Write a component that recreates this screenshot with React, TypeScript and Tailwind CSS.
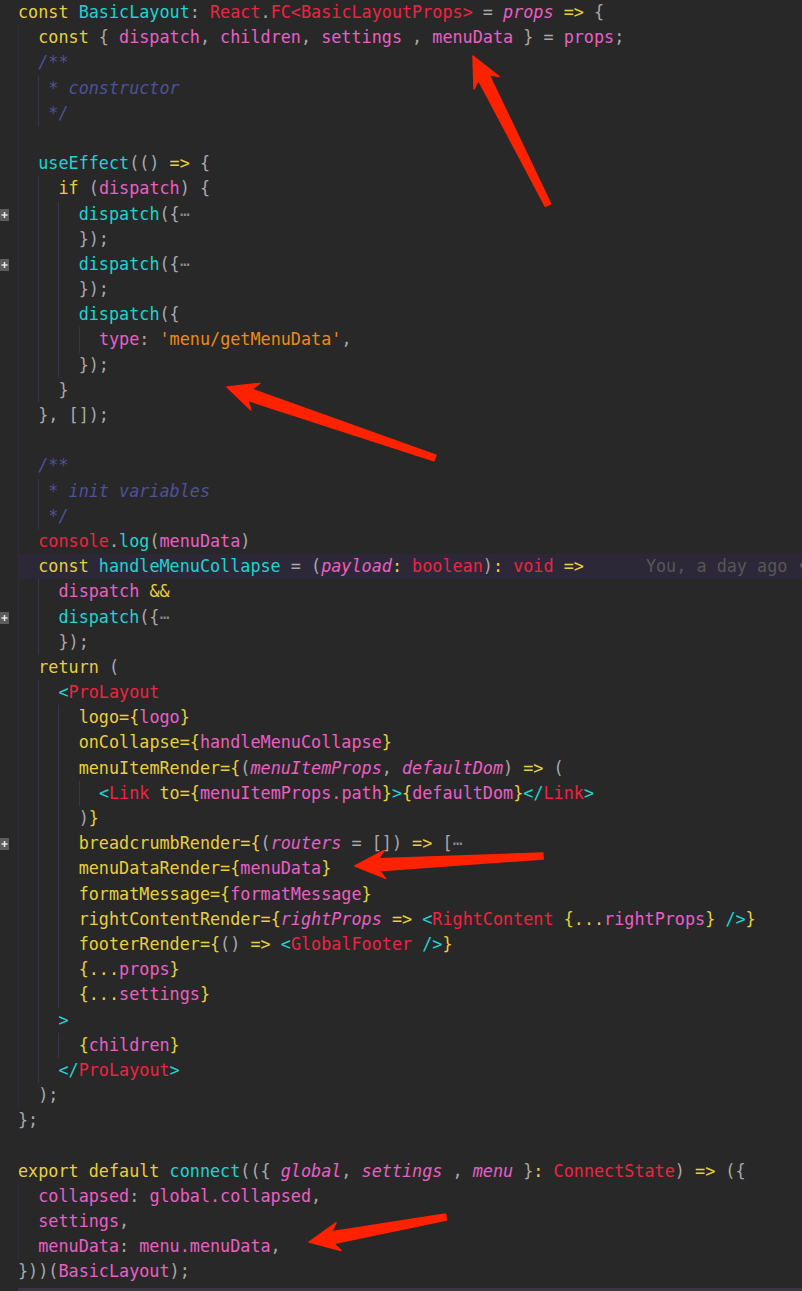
import React from "react";

type Tok = [string, string];
type Line = { ind: number; toks: Tok[]; fold?: boolean; hl?: boolean; guides?: number; blame?: boolean };

const Y = "text-[#e8cf3c]";
const C = "text-[#1ed3d3]";
const R = "text-[#ef2442]";
const P = "text-[#e860c4]";
const PI = "text-[#e860c4] italic";
const G = "text-[#a8a8a8]";
const CM = "text-[#4e5299] italic";
const O = "text-[#ef8a14]";
const D = "text-[#8a8a8a]";
const W = "";

const L = (ind: number, toks: Tok[], extra: Partial<Line> = {}): Line => ({ ind, toks, ...extra });

const lines: Line[] = [
  L(0, [["const", Y], [" ", W], ["BasicLayout", C], [": ", G], ["React", R], [".", G], ["FC", R], ["<", R], ["BasicLayoutProps", R], [">", R], [" = ", G], ["props", PI], [" ", W], ["=>", Y], [" {", G]]),
  L(2, [["const", Y], [" { ", G], ["dispatch", P], [", ", G], ["children", P], [", ", G], ["settings", P], [" , ", G], ["menuData", P], [" } = ", G], ["props", P], [";", G]]),
  L(2, [["/**", CM]]),
  L(3, [["* constructor", CM]]),
  L(3, [["*/", CM]]),
  L(0, [], { guides: 1 }),
  L(2, [["useEffect", C], ["(() ", G], ["=>", Y], [" {", G]]),
  L(4, [["if", Y], [" (", G], ["dispatch", P], [") {", G]]),
  L(6, [["dispatch", C], ["({", G], ["⋯", D]], { fold: true }),
  L(6, [["});", G]]),
  L(6, [["dispatch", C], ["({", G], ["⋯", D]], { fold: true }),
  L(6, [["});", G]]),
  L(6, [["dispatch", C], ["({", G]]),
  L(8, [["type", P], [": ", G], ["'menu/getMenuData'", O], [",", G]]),
  L(6, [["});", G]]),
  L(4, [["}", G]]),
  L(2, [["}, []);", G]]),
  L(0, [], { guides: 1 }),
  L(2, [["/**", CM]]),
  L(3, [["* init variables", CM]]),
  L(3, [["*/", CM]]),
  L(2, [["console", R], [".", G], ["log", C], ["(", G], ["menuData", P], [")", G]]),
  L(2, [["const", Y], [" ", W], ["handleMenuCollapse", C], [" = (", G], ["payload", PI], [":", Y], [" ", W], ["boolean", R], [")", G], [":", Y], [" ", W], ["void", R], [" ", W], ["=>", Y]], { hl: true, blame: true }),
  L(4, [["dispatch", P], [" ", W], ["&&", Y]]),
  L(4, [["dispatch", C], ["({", G], ["⋯", D]], { fold: true }),
  L(4, [["});", G]]),
  L(2, [["return", Y], [" (", G]]),
  L(4, [["<", C], ["ProLayout", R]]),
  L(6, [["logo=", Y], ["{", Y], ["logo", P], ["}", Y]]),
  L(6, [["onCollapse=", Y], ["{", Y], ["handleMenuCollapse", P], ["}", Y]]),
  L(6, [["menuItemRender=", Y], ["{", Y], ["(", G], ["menuItemProps", PI], [", ", G], ["defaultDom", PI], [")", G], [" ", W], ["=>", Y], [" (", G]]),
  L(8, [["<", C], ["Link", R], [" ", W], ["to=", Y], ["{", Y], ["menuItemProps.path", P], ["}", Y], [">", C], ["{", Y], ["defaultDom", P], ["}", Y], ["</", C], ["Link", R], [">", C]]),
  L(6, [[")", G], ["}", Y]]),
  L(6, [["breadcrumbRender=", Y], ["{", Y], ["(", G], ["routers", PI], [" = [])", G], [" ", W], ["=>", Y], [" [", G], ["⋯", D]], { fold: true }),
  L(6, [["menuDataRender=", Y], ["{", Y], ["menuData", P], ["}", Y]]),
  L(6, [["formatMessage=", Y], ["{", Y], ["formatMessage", P], ["}", Y]]),
  L(6, [["rightContentRender=", Y], ["{", Y], ["rightProps", PI], [" ", W], ["=>", Y], [" ", W], ["<", C], ["RightContent", R], [" ", W], ["{...", Y], ["rightProps", P], ["}", Y], [" ", W], ["/>", C], ["}", Y]]),
  L(6, [["footerRender=", Y], ["{", Y], ["()", G], [" ", W], ["=>", Y], [" ", W], ["<", C], ["GlobalFooter", R], [" ", W], ["/>", C], ["}", Y]]),
  L(6, [["{...", Y], ["props", P], ["}", Y]]),
  L(6, [["{...", Y], ["settings", P], ["}", Y]]),
  L(4, [[">", C]]),
  L(6, [["{", Y], ["children", P], ["}", Y]]),
  L(4, [["</", C], ["ProLayout", R], [">", C]]),
  L(2, [[");", G]]),
  L(0, [["};", G]]),
  L(0, []),
  L(0, [["export", Y], [" ", W], ["default", Y], [" ", W], ["connect", C], ["(({ ", G], ["global", PI], [", ", G], ["settings", PI], [" , ", G], ["menu", PI], [" }", G], [":", Y], [" ", W], ["ConnectState", R], [")", G], [" ", W], ["=>", Y], [" ({", G]]),
  L(2, [["collapsed", P], [": ", G], ["global.collapsed", P], [",", G]]),
  L(2, [["settings", P], [",", G]]),
  L(2, [["menuData", P], [": ", G], ["menu.menuData", P], [",", G]]),
  L(0, [["}))(", G], ["BasicLayout", P], [");", G]]),
];

function Fold() {
  return (
    <svg width="9" height="12" viewBox="0 0 9 12" className="absolute left-0 top-[7px]">
      <rect x="0" y="0" width="9" height="12" fill="#5c5c5c" />
      <rect x="1.5" y="5.25" width="6" height="1.5" fill="#e8e8e8" />
      <rect x="3.75" y="3" width="1.5" height="6" fill="#e8e8e8" />
    </svg>
  );
}

function arrow(tail: [number, number], tip: [number, number], headLen = 30, headHalf = 14, shaftHead = 6, shaftTail = 3) {
  const dx = tail[0] - tip[0];
  const dy = tail[1] - tip[1];
  const len = Math.hypot(dx, dy);
  const ux = dx / len;
  const uy = dy / len;
  const px = -uy;
  const py = ux;
  const bx = tip[0] + ux * headLen;
  const by = tip[1] + uy * headLen;
  const bx2 = tip[0] + ux * (headLen - 6);
  const by2 = tip[1] + uy * (headLen - 6);
  const pts = [
    [tip[0], tip[1]],
    [bx + px * headHalf, by + py * headHalf],
    [bx2 + px * shaftHead, by2 + py * shaftHead],
    [tail[0] + px * shaftTail, tail[1] + py * shaftTail],
    [tail[0] - px * shaftTail, tail[1] - py * shaftTail],
    [bx2 - px * shaftHead, by2 - py * shaftHead],
    [bx - px * headHalf, by - py * headHalf],
  ];
  return pts.map((p) => `${p[0].toFixed(1)},${p[1].toFixed(1)}`).join(" ");
}

const arrows: [[number, number], [number, number]][] = [
  [[548, 205], [473, 56]],
  [[435, 458], [227, 387]],
  [[543, 856], [355, 866]],
  [[446, 1217], [309, 1242]],
];

export default function App() {
  return (
    <div className="relative w-[802px] h-[1291px] overflow-hidden bg-[#282828] font-['DejaVu_Sans_Mono',monospace] text-[16.8px]">
      <div className="flex flex-col">
        {lines.map((ln, i) => {
          const guides = ln.guides ?? Math.ceil(ln.ind / 2);
          const rest = ln.ind - (ln.guides ? 0 : Math.floor(ln.ind / 2) * 2);
          const slots = [];
          for (let g = 0; g < guides; g++) {
            const w = ln.ind - g * 2 >= 2 || ln.guides ? "  " : " ";
            slots.push(
              <span key={g} className={`inline-block whitespace-pre ${g === 0 ? "shadow-[inset_1px_0_0_#302c3d]" : "shadow-[inset_1px_0_0_#383452]"}`}>
                {w}
              </span>
            );
          }
          const extra = ln.guides ? "" : rest > 0 && ln.ind % 2 === 1 ? "" : "";
          return (
            <div key={i} className="flex h-[25.2px] leading-[25.2px]">
              <div className="relative w-[18px] shrink-0">{ln.fold && <Fold />}</div>
              <div className={`flex-1 whitespace-pre ${ln.hl ? "bg-[#2d2837]" : ""}`}>
                {slots}
                {extra}
                {ln.toks.map((t, j) => (
                  <span key={j} className={t[1]}>
                    {t[0]}
                  </span>
                ))}
                {ln.blame && <span className="ml-[62px] text-[#575757]">You, a day ago •</span>}
              </div>
            </div>
          );
        })}
        <div className="flex mt-[3px]">
          <div className="w-[18px] shrink-0" />
          <div className="flex-1 h-[6px] bg-[#3a3542]" />
        </div>
      </div>
      <svg className="absolute inset-0 pointer-events-none" width="802" height="1291" viewBox="0 0 802 1291">
        {arrows.map((a, i) => (
          <polygon key={i} points={arrow(a[0], a[1])} fill="#ff2200" stroke="#ff2200" strokeWidth="1.5" strokeLinejoin="round" />
        ))}
      </svg>
    </div>
  );
}
